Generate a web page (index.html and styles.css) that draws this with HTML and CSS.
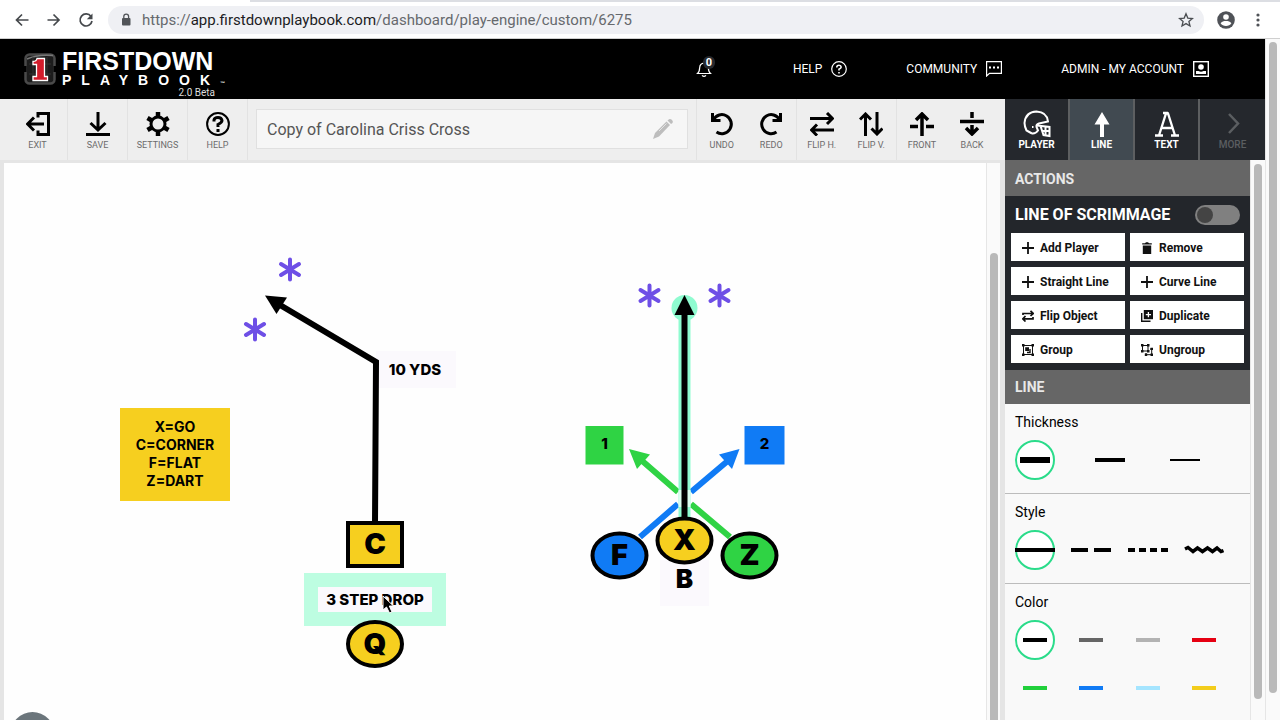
FILE: index.html
```html
<!DOCTYPE html>
<html lang="en">
<head>
<meta charset="utf-8">
<title>First Down Playbook</title>
<link rel="stylesheet" href="styles.css">
</head>
<body>
<div class="tabstrip"><div class="tabstrip-active"></div></div>
<div class="browser">
  <button class="nav-btn" aria-label="Back"><svg width="16" height="16" viewBox="0 0 16 16"><path d="M14.500 8H2.500M8 2.500L2.500 8L8 13.500" fill="none" stroke="#45484c" stroke-width="1.700"/></svg></button>
  <button class="nav-btn" aria-label="Forward"><svg width="16" height="16" viewBox="0 0 16 16"><path d="M1.500 8H13M7.500 2.500L13 8L7.500 13.500" fill="none" stroke="#45484c" stroke-width="1.700"/></svg></button>
  <button class="nav-btn" aria-label="Reload"><svg width="16" height="16" viewBox="0 0 16 16"><path d="M13 4.500A6 6 0 1 0 14 9" fill="none" stroke="#45484c" stroke-width="1.700"/><path d="M14.500 1.500V7.200H8.800Z" fill="#45484c"/></svg></button>
  <div class="address">
    <svg width="10" height="14" viewBox="0 0 10 14"><rect x="1" y="5" width="8.500" height="7.500" rx="1" fill="#515458"/><path d="M2.800 6V3.500a2.400 2.400 0 0 1 4.800 0V6" fill="none" stroke="#515458" stroke-width="1.300"/></svg>
    <div class="url" role="textbox" aria-label="Address">https://<span class="host">app.firstdownplaybook.com</span>/dashboard/play-engine/custom/6275</div>
    <svg width="16" height="16" viewBox="0 0 16 16"><path d="M8 1.800L9.800 6.100L14.400 6.500L10.900 9.500L12 14L8 11.600L4 14L5.100 9.500L1.600 6.500L6.200 6.100Z" fill="none" stroke="#4a4d51" stroke-width="1.300"/></svg>
  </div>
  <button class="nav-btn profile" aria-label="Profile"><svg width="18" height="18" viewBox="0 0 18 18"><circle cx="9" cy="9" r="8.800" fill="#4f5257"/><circle cx="9" cy="6" r="2.800" fill="#fff"/><path d="M3.600 12.200C4.500 10.300 7 9.900 9 9.900s4.500.4 5.400 2.300C13.200 14 11.300 15 9 15s-4.200-1-5.400-2.800Z" fill="#fff"/></svg></button>
  <button class="nav-btn" aria-label="Browser menu"><svg width="4" height="14" viewBox="0 0 4 14" fill="#4f5257"><circle cx="2" cy="2" r="1.600"/><circle cx="2" cy="7" r="1.600"/><circle cx="2" cy="12" r="1.600"/></svg></button>
</div>

<div class="window">
<div class="page">
  <header class="header">
    <a class="logo" href="#" aria-label="First Down Playbook">
      <svg class="logo-mark" width="32" height="32" viewBox="0 0 32 32"><rect x="1.500" y="1.500" width="29" height="29" rx="4" fill="#1c1c1c" stroke="#4a4a4a" stroke-width="2.500"/><path d="M3 6Q14 1 29 2.500" stroke="#777" stroke-width="1.500" fill="none"/><path d="M5 11H27M5 21H27M9 4V28M23 4V28" stroke="#333"/><path d="M1 13V19M31 13V19" stroke="#000" stroke-width="3"/><path d="M13 5.500H20.500V23.500H23.500V27.500H9V23.500H12.500V11.500H9V8.500Q12.500 8.500 13 5.500Z" fill="#d31c2b" stroke="#fff" stroke-width="1.300"/></svg>
      <span class="logo-text">
        <span class="logo-name">FIRSTDOWN</span>
        <span class="logo-sub">PLAYBOOK<small>™</small></span>
        <span class="logo-beta">2.0 Beta</span>
      </span>
    </a>
    <nav class="menu">
      <button class="bell" aria-label="Notifications"><svg width="16" height="18" viewBox="0 0 16 18"><path d="M1.500 13.500H14.500Q12.500 12 12.300 7.500Q12 3.500 8 3.200Q4 3.500 3.700 7.500Q3.500 12 1.500 13.500Z" fill="none" stroke="#fff" stroke-width="1.200"/><path d="M6 15.300Q8 17.300 10 15.300M8 1.500V3" fill="none" stroke="#fff" stroke-width="1.200"/></svg><span class="badge">0</span></button>
      <a href="#">HELP <svg width="16" height="16" viewBox="0 0 16 16" fill="none" stroke="#fff"><circle cx="8" cy="8" r="7.300" stroke-width="1.200"/><path d="M5.800 6.500V5.800Q6 4.200 8 4.200T10.200 6Q10.200 7.200 8 8.300V9.600M8 11V12.600" stroke-width="1.600"/></svg></a>
      <a href="#">COMMUNITY <svg width="16" height="16" viewBox="0 0 16 16"><path d="M.6.600H15.400V12.400H3.500L.6 15Z" fill="none" stroke="#fff" stroke-width="1.200"/><path d="M3 5.500h2v2H3zM7 5.500h2v2H7zM11 5.500h2v2h-2z" fill="#fff"/></svg></a>
      <a href="#">ADMIN - MY ACCOUNT <svg width="16" height="16" viewBox="0 0 16 16"><rect x=".7" y=".7" width="14.600" height="14.600" fill="none" stroke="#fff" stroke-width="1.400"/><circle cx="8" cy="6" r="2.800" fill="#fff"/><path d="M3 13V10H5.500Q8 11.500 10.500 10H13V13Z" fill="#fff"/></svg></a>
    </nav>
  </header>

  <div class="bar">
    <div class="tools">
      <button class="tool"><svg width="24" height="24" viewBox="0 0 24 24"><path d="M12 5.500V1.500H22.500V22.500H12V18.500M1.500 12H18M8 5.500L1.500 12L8 18.500"/></svg>EXIT</button>
      <button class="tool"><svg width="24" height="24" viewBox="0 0 24 24"><path d="M12 0V18M4.500 11L12 18L19.500 11M0 22.500H24"/></svg>SAVE</button>
      <button class="tool"><svg width="24" height="24" viewBox="0 0 24 24"><circle cx="12" cy="12" r="7"/><path stroke-width="4.500" d="M12 0V5M12 19V24M1.500 6L5.800 8.500M18.200 15.500L22.500 18M1.500 18L5.800 15.500M18.200 8.500L22.500 6"/></svg>SETTINGS</button>
      <button class="tool"><svg width="24" height="24" viewBox="0 0 24 24"><circle cx="12" cy="12" r="10.900" stroke-width="2"/><path d="M8 9.500V8Q8.500 5.500 12 5.500T16 8.500Q16 10.500 12 12.500V15M12 17V20"/></svg>HELP</button>
    </div>
    <div class="name-box">
      <input class="name" type="text" value="Copy of Carolina Criss Cross" aria-label="Play name">
      <svg width="22" height="22" viewBox="0 0 22 22" fill="#bdbdbd"><path d="M1 21L3 15L14.500 3.500L18 7L7 18.500Z"/><path d="M15.500 2.500L17 1.200Q18.500.5 20 2T20.500 5L19 6Z"/><path d="M7 13L14.500 5.500" stroke="#e4e4e4"/></svg>
    </div>
    <div class="pair">
      <button class="tool"><svg width="24" height="24" viewBox="0 0 24 24"><path d="M3.500 7.500A9.500 9.500 0 1 1 6.500 20M2.500 1V8.500H10.500"/></svg>UNDO</button>
      <button class="tool"><svg width="24" height="24" viewBox="0 0 24 24"><path d="M20.500 7.500A9.500 9.500 0 1 0 17.500 20M21.500 1V8.500H13.500"/></svg>REDO</button>
    </div>
    <div class="pair">
      <button class="tool"><svg width="24" height="24" viewBox="0 0 24 24"><path d="M0 6.500H22M17 1L22.500 6.500L17 12M24 18H2M7 12.500L1.500 18L7 23.500"/></svg>FLIP H.</button>
      <button class="tool"><svg width="24" height="24" viewBox="0 0 24 24"><path d="M6.500 24V2M1 7.500L6.500 2L12 7.500M18 0V22M12.500 16.500L18 22L23.500 16.500"/></svg>FLIP V.</button>
    </div>
    <div class="pair last">
      <button class="tool"><svg width="24" height="24" viewBox="0 0 24 24"><path stroke-width="3.500" d="M12 24V2M6 8L12 2L18 8M0 14.500H8M16 14.500H24"/></svg>FRONT</button>
      <button class="tool"><svg width="24" height="24" viewBox="0 0 24 24"><path stroke-width="3.500" d="M12 0V6M0 9.500H24M12 13V22M6 16L12 22L18 16"/></svg>BACK</button>
    </div>
    <div class="modes">
      <button class="mode"><svg width="28" height="28" viewBox="0 0 28 28" fill="none" stroke="#fff" stroke-width="2"><path d="M9 23.500L3.500 20.500Q1.500 16 1.500 13Q2.500 2 13.500 1.500Q24 2 25 11.500L16 13.500Q13 14.500 13.500 17L15 20.500Q12.500 24 9 23.500"/><path d="M14 15.500L26.500 17V26L20.500 25L17.500 16M18.500 21H26.500M22.500 16.500V25.500"/><path d="M9 17H10.500"/></svg>PLAYER</button>
      <button class="mode active"><svg width="28" height="28" viewBox="0 0 28 28" fill="#fff"><path d="M14 2L21.500 14.500H16V27H12V14.500H6.500Z"/></svg>LINE</button>
      <button class="mode"><svg width="28" height="28" viewBox="0 0 28 28" fill="none" stroke="#fff" stroke-width="2.300"><path d="M6 25.500L13 3.500H15L22 25.500M8.500 18H19.500M2 25.500H10M18 25.500H26M10 3H15"/></svg>TEXT</button>
      <button class="mode more" disabled><svg width="28" height="28" viewBox="0 0 28 28" fill="none" stroke="#5b5e61" stroke-width="2.500"><path d="M10 4L19 13.500L10 23"/></svg>MORE</button>
    </div>
  </div>

  <div class="work">
    <main class="canvas">
      <svg class="play" viewBox="4 163 982 557" preserveAspectRatio="xMinYMin meet">
        <defs><path id="star" d="M0-10V10M-9-5.500L9 5.500M-9 5.500L9-5.500" stroke="#6e4fe6" stroke-width="4" stroke-linecap="round"/></defs>
        <use href="#star" x="290" y="269.500"/><use href="#star" x="255" y="329.500"/><use href="#star" x="649.500" y="295.500"/><use href="#star" x="719.500" y="295.500"/>
        <rect x="376" y="351" width="80" height="37" fill="#fbf9fd"/>
        <path d="M375 524L376 362L280 305" fill="none" stroke="#000" stroke-width="6"/>
        <path d="M265 295.500L287 297.500L276.500 314Z"/>
        <text class="tag" x="415" y="375">10 YDS</text>
        <rect x="120" y="408" width="110" height="93" fill="#f6cf1f"/>
        <text class="note" x="175" y="432">X=GO</text>
        <text class="note" x="175" y="450">C=CORNER</text>
        <text class="note" x="175" y="468">F=FLAT</text>
        <text class="note" x="175" y="486">Z=DART</text>
        <rect x="304" y="573" width="142" height="53" fill="#bdfde1"/>
        <rect x="318" y="587" width="114" height="25" fill="#fbf9fd"/>
        <text class="tag" x="375" y="605">3 STEP DROP</text>
        <rect x="348" y="523" width="54" height="43" fill="#f6cf1f" stroke="#000" stroke-width="4"/>
        <text class="letter" x="375" y="554">C</text>
        <ellipse cx="375" cy="644" rx="27" ry="22" fill="#f6cf1f" stroke="#000" stroke-width="4"/>
        <text class="letter" x="375" y="654">Q</text>
        <rect x="660" y="560" width="49" height="46" fill="#fbf9fd"/>
        <path d="M640 537L678 504M691 492L730 459" stroke="#107bf5" stroke-width="6"/>
        <path d="M739.500 449L732 469L719 454.500Z" fill="#107bf5"/>
        <path d="M730 537L691 504M678 492L640 459" stroke="#2fd344" stroke-width="6"/>
        <path d="M629 449L650 454.500L637 469Z" fill="#2fd344"/>
        <circle cx="684.500" cy="308" r="13" fill="#8ffbd0"/>
        <path d="M684.500 308V520" stroke="#8ffbd0" stroke-width="12"/>
        <path d="M684.500 490V507" stroke="#dcfdf0" stroke-width="12"/>
        <path d="M684.500 312V520" stroke="#000" stroke-width="6"/>
        <path d="M684.500 295L694.500 315H674.500Z"/>
        <rect x="585.500" y="426" width="38" height="38.500" fill="#2fd344"/>
        <text class="tag" x="604.500" y="449">1</text>
        <rect x="744.500" y="426" width="40" height="38.500" fill="#107bf5"/>
        <text class="tag" x="764.500" y="449">2</text>
        <ellipse cx="619.500" cy="555.500" rx="27" ry="22" fill="#107bf5" stroke="#000" stroke-width="4"/>
        <text class="letter" x="619.500" y="565">F</text>
        <ellipse cx="684.500" cy="540.500" rx="27" ry="22" fill="#f6cf1f" stroke="#000" stroke-width="4"/>
        <text class="letter" x="684.500" y="550">X</text>
        <ellipse cx="749.500" cy="555.500" rx="27" ry="22" fill="#2fd344" stroke="#000" stroke-width="4"/>
        <text class="letter" x="749.500" y="565">Z</text>
        <text class="letter small" x="684.500" y="588">B</text>
        <circle cx="32.500" cy="734" r="22" fill="#6b757b"/>
        <path d="M383 596V610L386.500 607L389.500 613L392 612L389.300 606H393.500Z" fill="#000" stroke="#fff"/>
      </svg>
    </main>
    <div class="scroll scroll-canvas"><div class="thumb"></div></div>
    <aside class="panel">
      <h2 class="panel-title">ACTIONS</h2>
      <section class="actions">
        <label class="scrimmage">LINE OF SCRIMMAGE <input class="switch" type="checkbox" role="switch"></label>
        <div class="action-grid">
          <button class="action"><svg width="12" height="12" viewBox="0 0 12 12"><path d="M6 0V12M0 6H12" stroke="#111" stroke-width="1.800"/></svg>Add Player</button>
          <button class="action"><svg width="12" height="12" viewBox="0 0 12 12" fill="#111"><path d="M1.200 1.200H4L5 .2H7L8 1.200H10.800V2.400H1.200ZM1.800 3.500H10.200V12H1.800Z"/></svg>Remove</button>
          <button class="action"><svg width="12" height="12" viewBox="0 0 12 12"><path d="M6 0V12M0 6H12" stroke="#111" stroke-width="1.800"/></svg>Straight Line</button>
          <button class="action"><svg width="12" height="12" viewBox="0 0 12 12"><path d="M6 0V12M0 6H12" stroke="#111" stroke-width="1.800"/></svg>Curve Line</button>
          <button class="action"><svg width="12" height="12" viewBox="0 0 12 12" fill="none" stroke="#111" stroke-width="1.700"><path d="M1 5V3.500H11M8.500 .8L11.200 3.500L8.500 6M11 7V8.800H1M3.500 6L.8 8.800L3.500 11.500"/></svg>Flip Object</button>
          <button class="action"><svg width="12" height="12" viewBox="0 0 12 12"><path d="M.7 3V11.300H9.500" fill="none" stroke="#111" stroke-width="1.400"/><rect x="2.800" y="0" width="9.200" height="9.200" fill="#111"/><path d="M7.400 2V7.200M4.800 4.600H10" stroke="#fff" stroke-width="1.300"/></svg>Duplicate</button>
          <button class="action"><svg width="12" height="12" viewBox="0 0 12 12"><path d="M1.500 1.500H10.500V10.500H1.500Z" fill="none" stroke="#111"/><path d="M0 0H2.500V2.500H0ZM9.500 0H12V2.500H9.500ZM0 9.500H2.500V12H0ZM9.500 9.500H12V12H9.500ZM3.200 3.200H7V7H3.200Z" fill="#111"/><path d="M8 5V8.500H5" fill="none" stroke="#111" stroke-width="1.400"/></svg>Group</button>
          <button class="action"><svg width="12" height="12" viewBox="0 0 12 12"><path d="M1.500 1.500H7V7H1.500ZM9 5H10.700V10.700H5V9" fill="none" stroke="#111"/><path d="M0 0H2.500V2.500H0ZM6 0H8.500V2.500H6ZM0 6H2.500V8.500H0ZM6 6H8.500V8.500H6ZM9.500 3.800H12V6H9.500ZM9.500 9.500H12V12H9.500ZM3.800 9.500H6.200V12H3.800Z" fill="#111"/></svg>Ungroup</button>
        </div>
      </section>
      <h2 class="panel-title line-title">LINE</h2>
      <fieldset class="group">
        <legend>Thickness</legend>
        <div class="options three">
          <label class="option"><input type="radio" name="thick" aria-label="Thick" checked><svg width="30" height="6"><path d="M0 3H30" stroke="#000" stroke-width="6"/></svg></label>
          <label class="option"><input type="radio" name="thick" aria-label="Medium"><svg width="30" height="4"><path d="M0 2H30" stroke="#000" stroke-width="4"/></svg></label>
          <label class="option"><input type="radio" name="thick" aria-label="Thin"><svg width="30" height="2"><path d="M0 1H30" stroke="#000" stroke-width="2"/></svg></label>
        </div>
      </fieldset>
      <fieldset class="group">
        <legend>Style</legend>
        <div class="options">
          <label class="option"><input type="radio" name="style" aria-label="Solid" checked><svg width="40" height="4"><path d="M0 2H40" stroke="#000" stroke-width="4"/></svg></label>
          <label class="option"><input type="radio" name="style" aria-label="Long dash"><svg width="40" height="4"><path d="M0 2H40" stroke="#000" stroke-width="4" stroke-dasharray="17 6"/></svg></label>
          <label class="option"><input type="radio" name="style" aria-label="Short dash"><svg width="40" height="4"><path d="M0 2H40" stroke="#000" stroke-width="4" stroke-dasharray="7 4"/></svg></label>
          <label class="option"><input type="radio" name="style" aria-label="Zigzag"><svg width="40" height="10"><path d="M1 4L4 2.500L9 6.500L13.500 3L18.500 6.500L23.500 3L28.500 6.500L33 3L37 6.500L39.500 5.500" fill="none" stroke="#000" stroke-width="3.500"/></svg></label>
        </div>
      </fieldset>
      <fieldset class="group">
        <legend>Color</legend>
        <div class="options">
          <label class="option"><input type="radio" name="color" aria-label="Black" checked><span class="swatch black"></span></label>
          <label class="option"><input type="radio" name="color" aria-label="Dark gray"><span class="swatch dark"></span></label>
          <label class="option"><input type="radio" name="color" aria-label="Light gray"><span class="swatch light"></span></label>
          <label class="option"><input type="radio" name="color" aria-label="Red"><span class="swatch red"></span></label>
          <label class="option"><input type="radio" name="color" aria-label="Green"><span class="swatch green"></span></label>
          <label class="option"><input type="radio" name="color" aria-label="Blue"><span class="swatch blue"></span></label>
          <label class="option"><input type="radio" name="color" aria-label="Sky"><span class="swatch sky"></span></label>
          <label class="option"><input type="radio" name="color" aria-label="Yellow"><span class="swatch yellow"></span></label>
        </div>
      </fieldset>
    </aside>
    <div class="scroll scroll-panel"><div class="thumb"></div></div>
  </div>
</div>
<div class="scroll scroll-page"><div class="thumb"></div></div>
</div>
</body>
</html>
```
FILE: styles.css
```css
* { box-sizing: border-box; }
body { margin: 0; height: 100vh; display: flex; flex-direction: column; overflow: hidden; font-family: Roboto, "Liberation Sans", sans-serif; background: #fff; color: #000; }
button { border: 0; padding: 0; margin: 0; background: none; font: inherit; color: inherit; }
svg { display: block; flex: none; }

.tabstrip { flex: none; height: 2px; background: #dcdee3; }
.tabstrip-active { width: 250px; height: 2px; background: #fff; }
.browser { flex: none; height: 37px; display: flex; align-items: center; padding: 0 12px 1px 14px; border-bottom: 1px solid #cfcfcf; }
.nav-btn { display: flex; margin-right: 16px; }
.nav-btn:last-child { width: 20px; margin-right: 0; justify-content: center; }
.address { flex: 1; height: 28px; display: flex; align-items: center; border-radius: 14px; background: #eff0f4; padding: 0 10px 0 13px; margin-right: 13px; margin-left: -2px; }
.url { flex: 1; margin-left: 11px; font-size: 15px; color: #66696d; white-space: nowrap; }
.host { color: #1c1d1f; }
.profile { margin-right: 13px; }

.window { flex: 1; min-height: 0; display: flex; }
.page { flex: 1; min-width: 0; display: flex; flex-direction: column; }
.header { flex: none; height: 60px; background: #000; color: #fff; display: flex; justify-content: space-between; padding: 0 56px 0 24px; }
.logo { display: flex; color: #fff; text-decoration: none; padding-top: 11px; gap: 6px; }
.logo-mark { margin-top: 3px; }
.logo-text { display: flex; flex-direction: column; width: 160px; }
.logo-name { font: bold 25px/23px "Liberation Sans", sans-serif; }
.logo-sub { height: 14px; font: bold 14px/14px "Liberation Sans", sans-serif; letter-spacing: 10px; white-space: nowrap; }
.logo-sub small { font-size: 5px; line-height: 5px; letter-spacing: 0; }
.logo-beta { font-size: 10px; line-height: 11px; color: #ddd; align-self: flex-end; padding-right: 7px; }
.menu { display: flex; align-items: center; gap: 59px; font-size: 12px; }
.menu a { display: flex; align-items: center; gap: 9px; color: #fff; text-decoration: none; }
.bell { position: relative; margin-right: 22px; }
.badge { position: absolute; left: 7px; top: -4px; width: 12px; height: 13px; border-radius: 6px; background: #26292e; font-size: 11px; line-height: 13px; font-weight: 700; text-align: center; }

.bar { flex: none; height: 61px; display: flex; background: #eee; }
.tools { display: flex; padding-left: 8px; }
.tool { width: 60px; padding-top: 4px; display: flex; flex-direction: column; align-items: center; justify-content: center; gap: 3px; font-size: 9px; line-height: 12px; color: #6c6c6c; }
.tool svg { fill: none; stroke: #000; stroke-width: 3; }
.tools .tool { border-right: 1px solid #e2e2e2; }
.name-box { flex: 1; min-width: 0; margin: 10px 8px 11px 8px; display: flex; align-items: center; background: #f6f6f6; border: 1px solid #e0e0e0; padding: 0 13px 0 10px; }
.name { flex: 1; min-width: 0; border: 0; padding: 0; background: none; font: 16px Roboto, "Liberation Sans", sans-serif; color: #555; outline: 0; }
.pair { display: flex; width: 100px; border-left: 1px solid #e2e2e2; }
.pair .tool { width: 50px; }
.pair.last { width: 109px; }
.modes { display: flex; }
.mode { width: 65px; border-right: 2px solid #5d5f61; padding-top: 2px; background: #25282d; color: #fff; display: flex; flex-direction: column; align-items: center; justify-content: center; gap: 1px; font-size: 10px; line-height: 12px; font-weight: 700; }
.mode.active { background: #414a51; }
.mode.more { color: #5b5e61; font-weight: 500; border-right: 0; }

.work { flex: 1; min-height: 0; display: flex; background: #e5e5e5; padding-left: 4px; }
.canvas { flex: 1; min-width: 0; margin-top: 3px; background: #fefefe; overflow: hidden; }
.play { width: 100%; min-height: 557px; }
.play text { text-anchor: middle; font-family: Inter, "Liberation Sans", sans-serif; font-weight: 800; }
.play .note { font-size: 14px; font-weight: 700; }
.play .tag { font-size: 15px; }
.play .letter { font-size: 29px; font-weight: 900; }
.play .letter.small { font-size: 26px; }

.scroll { flex: none; width: 15px; display: flex; justify-content: center; background: #fafafa; border-left: 1px solid #e6e6e6; }
.thumb { width: 8px; border-radius: 4px; background: #b9b9b9; }
.scroll-canvas { width: 14px; margin-top: 3px; margin-right: 5px; padding-top: 90px; }
.scroll-canvas .thumb { border-radius: 4px 4px 0 0; }
.scroll-panel { padding: 4px 0 21px; }
.scroll-page { padding: 3px 0 27px; }

.panel { flex: none; width: 245px; background: #f9f9f9; overflow: hidden; }
.panel-title { margin: 0; height: 36px; padding: 2px 10px 0; background: #666; color: #e8e8e8; font-size: 14px; line-height: 34px; font-weight: 700; }
.line-title { height: 34px; padding-top: 0; }
.actions { background: #23262b; padding: 0 6px 7px; }
.scrimmage { display: flex; align-items: center; justify-content: space-between; height: 37px; padding: 0 4px; color: #fff; font-size: 16px; font-weight: 700; white-space: nowrap; }
.switch { appearance: none; margin: 0; width: 45px; height: 20px; border-radius: 10px; background: #808080; padding: 2px; }
.switch::before { content: ""; display: block; width: 16px; height: 16px; border-radius: 50%; background: #444; }
.action-grid { display: grid; grid-template-columns: 1fr 1fr; gap: 6px 5px; }
.action { height: 28px; background: #fff; display: flex; align-items: center; gap: 6px; padding: 1px 0 0 11px; font-size: 12px; font-weight: 700; color: #111; white-space: nowrap; }
.group { border: 0; margin: 0; padding: 8px 26px 13px 10px; min-width: 0; }
.group + .group { border-top: 1px solid #bcbcbc; }
.group legend { float: left; width: 100%; padding: 0; font-size: 14px; line-height: 20px; margin-bottom: 8px; }
.options { clear: both; display: grid; grid-template-columns: repeat(4, 40px); justify-content: space-between; row-gap: 8px; }
.options.three { grid-template-columns: repeat(3, 40px); justify-content: start; column-gap: 35px; }
.option { display: grid; place-items: center; width: 40px; height: 40px; }
.option > * { grid-area: 1 / 1; }
.option input { appearance: none; margin: 0; width: 40px; height: 40px; border-radius: 50%; }
.option input:checked { border: 2px solid #2bdc8b; background: #fff; }
.option svg, .swatch { z-index: 1; }
.swatch { width: 24px; height: 4px; }
.black { background: #000; }
.dark { background: #666; }
.light { background: #b3b3b3; }
.red { background: #e60012; }
.green { background: #21d03b; }
.blue { background: #107bf5; }
.sky { background: #a5e5ff; }
.yellow { background: #f3cd1c; }
```
